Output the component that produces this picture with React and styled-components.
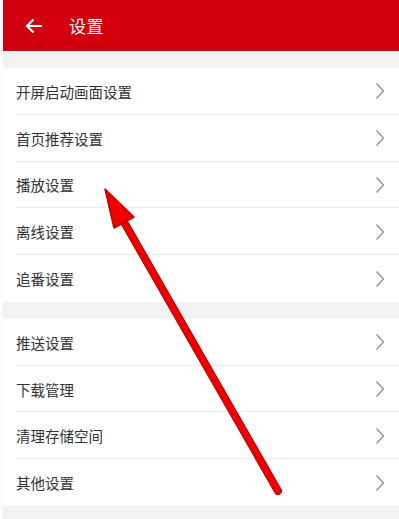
import React from 'react';
import styled, { createGlobalStyle } from 'styled-components';

const GlobalStyle = createGlobalStyle`
  html, body {
    margin: 0;
    padding: 0;
    background: #ffffff;
  }
  body {
    font-family: "Noto Sans CJK SC", "Noto Sans", sans-serif;
  }
`;

const Page = styled.div`
  position: relative;
  width: 399px;
  height: 519px;
  overflow: hidden;
  padding-left: 3px;
  box-sizing: border-box;
  background: #fdfdfd;
`;

const Content = styled.div`
  height: 100%;
  background: #f2f2f2;
`;

const Header = styled.div`
  height: 51px;
  background: #d0000f;
  display: flex;
  align-items: center;
  padding-left: 21px;
  color: #fff;
`;

const BackButton = styled.div`
  width: 20px;
  height: 20px;
  display: flex;
  align-items: center;
  justify-content: center;
  margin-right: 25px;
`;

const Title = styled.div`
  font-size: 17px;
  letter-spacing: 0.5px;
`;

const Group = styled.div`
  background: #fff;
  margin-top: ${(p) => p.$gap}px;
`;

const Row = styled.div`
  height: ${(p) => p.$h}px;
  display: flex;
  align-items: center;
  justify-content: space-between;
  padding: 0 14px 0 13px;
  position: relative;
  box-sizing: border-box;
  font-size: 14.5px;
  color: #333;

  &:not(:last-child)::after {
    content: '';
    position: absolute;
    left: 13px;
    right: 0;
    bottom: 0;
    height: 1px;
    background: #e9e9e9;
  }
`;

const Arrow = styled.svg`
  position: absolute;
  left: 0;
  top: 0;
  pointer-events: none;
`;

const Chevron = () => (
  <svg width="10" height="18" viewBox="0 0 10 18">
    <path d="M1.5 1.5 L8.5 9 L1.5 16.5" fill="none" stroke="#8a8a8a" strokeWidth="1.2" />
  </svg>
);

const groupA = ['开屏启动画面设置', '首页推荐设置', '播放设置', '离线设置', '追番设置'];
const groupB = ['推送设置', '下载管理', '清理存储空间', '其他设置'];

export default function App() {
  return (
    <Page>
      <GlobalStyle />
      <Content>
        <Header>
          <BackButton>
            <svg width="18" height="16" viewBox="0 0 18 16">
              <path d="M17 8 H2 M8.5 1.5 L2 8 L8.5 14.5" fill="none" stroke="#fff" strokeWidth="2.2" />
            </svg>
          </BackButton>
          <Title>设置</Title>
        </Header>
        <Group $gap={17}>
          {groupA.map((t) => (
            <Row key={t} $h={46.8}>
              <span>{t}</span>
              <Chevron />
            </Row>
          ))}
        </Group>
        <Group $gap={17}>
          {groupB.map((t) => (
            <Row key={t} $h={46.75}>
              <span>{t}</span>
              <Chevron />
            </Row>
          ))}
        </Group>
      </Content>
      <Arrow width="399" height="519" viewBox="0 0 399 519">
        <line x1="278" y1="491" x2="120" y2="215" stroke="#b80000" strokeWidth="8" strokeLinecap="round" />
        <line x1="278" y1="491" x2="120" y2="215" stroke="#ee0000" strokeWidth="6" strokeLinecap="round" />
        <polygon points="105,189 134,217 114,228" fill="#ee0000" stroke="#c00000" strokeWidth="1.5" strokeLinejoin="round" />
      </Arrow>
    </Page>
  );
}
